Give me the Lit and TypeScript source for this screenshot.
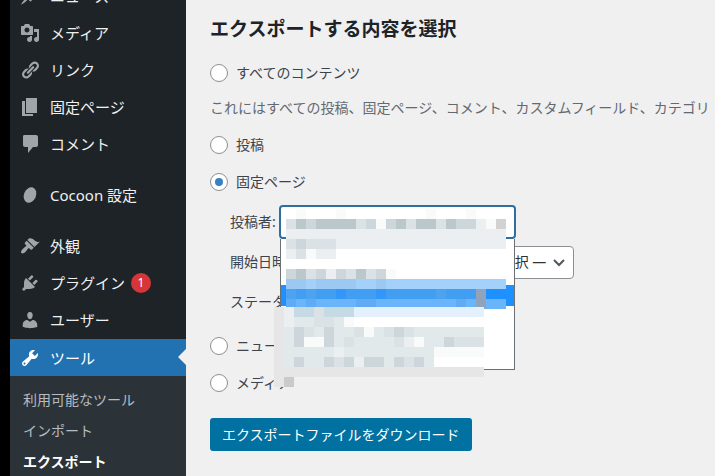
import { LitElement, html, css, svg } from "lit";
import { customElement, property } from "lit/decorators.js";
import { classMap } from "lit/directives/class-map.js";

const ICONS: Record<string, string> = {
  post: "M10.44 3.02l1.82-1.82 6.36 6.35-1.83 1.82c-1.05-.68-2.48-.57-3.41.36l-.75.75c-.92.93-1.04 2.35-.35 3.41l-1.83 1.82-2.41-2.41-2.8 2.79c-.42.42-3.38 2.71-3.8 2.29s1.86-3.39 2.28-3.81l2.79-2.79L4.1 9.36l1.83-1.82c1.05.69 2.48.57 3.4-.36l.75-.75c.93-.92 1.05-2.35.36-3.41z",
  media: "M13 11V4c0-.55-.45-1-1-1h-1.67L9 1H5L3.67 3H2c-.55 0-1 .45-1 1v7c0 .55.45 1 1 1h10c.55 0 1-.45 1-1zM7 4.5c1.38 0 2.5 1.12 2.5 2.5S8.38 9.5 7 9.5 4.5 8.38 4.5 7 5.62 4.5 7 4.5zM14 6h5v10.5c0 1.38-1.12 2.5-2.5 2.5S14 17.88 14 16.5s1.12-2.5 2.5-2.5c.17 0 .34.02.5.05V9h-3V6zm-4 8.05V13h2v3.5c0 1.38-1.12 2.5-2.5 2.5S7 17.88 7 16.5 8.12 14 9.5 14c.17 0 .34.02.5.05z",
  links: "M17.74 2.76c1.68 1.69 1.68 4.41 0 6.1l-1.53 1.52c-1.12 1.12-2.7 1.47-4.14 1.09l2.62-2.61.76-.77.76-.76c.84-.84.84-2.2 0-3.04-.84-.85-2.2-.85-3.04 0l-.77.76-3.38 3.38c-.37-1.44-.02-3.02 1.1-4.14l1.52-1.53c1.69-1.68 4.42-1.68 6.1 0zM8.59 13.43l5.34-5.34c.42-.42.42-1.1 0-1.52-.44-.43-1.13-.39-1.53 0l-5.33 5.34c-.42.42-.42 1.1 0 1.52.44.43 1.13.39 1.52 0zm-.76 2.29l4.14-4.15c.38 1.44.03 3.02-1.09 4.14l-1.52 1.53c-1.69 1.68-4.41 1.68-6.1 0-1.68-1.68-1.68-4.42 0-6.1l1.53-1.52c1.12-1.12 2.7-1.47 4.14-1.1l-4.14 4.15c-.85.84-.85 2.2 0 3.05.84.84 2.2.84 3.04 0z",
  page: "M6 16V1h11v15H6zm-1 1h8v2H2V4h3v13z",
  comments: "M4 1h12c1.1 0 2 .9 2 2v8c0 1.1-.9 2-2 2h-3l-5 6v-6H5c-1.1 0-2-.9-2-2V3c0-1.1.4-2 1-2z",
  appearance: "M14.48 11.06L7.41 3.99l1.5-1.5c.5-.56 2.3-.47 3.51.32 1.21.8 1.43 1.28 2.91 2.1 1.18.64 2.45 1.26 4.45.85zm-.71.71L6.7 4.7 4.93 6.47c-.39.39-.39 1.02 0 1.41l1.06 1.06c.39.39.39 1.03 0 1.42-.6.6-1.43 1.11-2.21 1.69-.35.26-.7.53-1.01.84C1.43 14.23.4 16.08 1.4 17.07c.99 1 2.84-.03 4.18-1.36.31-.31.58-.66.85-1.02.57-.78 1.08-1.61 1.69-2.21.39-.39 1.02-.39 1.41 0l1.06 1.06c.39.39 1.02.39 1.41 0z",
  plugins: "M13.11 4.36L9.87 7.6 8 5.73l3.24-3.24c.35-.34 1.05-.2 1.56.32.52.51.66 1.21.31 1.55zm-8 1.77l.91-1.12 9.01 9.01-1.19.84c-.71.71-2.63 1.16-3.82 1.16H6.14L4.9 17.26c-.59.59-1.54.59-2.12 0-.59-.58-.59-1.53 0-2.12l1.24-1.24v-3.88c0-1.13.4-3.19 1.09-3.89zm7.26 3.97l3.24-3.24c.34-.35 1.04-.21 1.55.31.52.51.66 1.21.31 1.55l-3.24 3.25z",
  users: "M10 9.25c-2.27 0-2.73-3.44-2.73-3.44C7 4.02 7.82 2 9.97 2c2.16 0 2.98 2.02 2.71 3.81 0 0-.41 3.44-2.68 3.44zm0 2.57L12.72 10c2.39 0 4.52 2.33 4.52 4.53v2.49s-3.65 1.13-7.24 1.13c-3.65 0-7.24-1.13-7.24-1.13v-2.49c0-2.25 1.94-4.48 4.47-4.48z",
  tools: "M16.68 9.77c-1.34 1.34-3.3 1.67-4.95.99l-5.41 6.52c-.99.99-2.59.99-3.58 0s-.99-2.59 0-3.57l6.52-5.42c-.68-1.65-.35-3.61.99-4.95 1.28-1.28 3.12-1.62 4.72-1.06l-2.89 2.89 2.82 2.82 2.86-2.87c.53 1.58.18 3.39-1.08 4.65zM3.81 16.21c.4.39 1.04.39 1.43 0 .4-.4.4-1.04 0-1.43-.39-.4-1.03-.4-1.43 0-.39.39-.39 1.03 0 1.43z",
};

interface MenuItem {
  label: string;
  icon: string;
  badge?: number;
  current?: boolean;
  spaced?: boolean;
}

const MENU: MenuItem[] = [
  { label: "ニュース", icon: "post" },
  { label: "メディア", icon: "media" },
  { label: "リンク", icon: "links" },
  { label: "固定ページ", icon: "page" },
  { label: "コメント", icon: "comments" },
  { label: "Cocoon 設定", icon: "cocoon", spaced: true },
  { label: "外観", icon: "appearance", spaced: true },
  { label: "プラグイン", icon: "plugins", badge: 1 },
  { label: "ユーザー", icon: "users" },
  { label: "ツール", icon: "tools", current: true },
];

const SUBMENU = ["利用可能なツール", "インポート", "エクスポート"];

const PALETTE: Record<string, string> = {
  w: "#ffffff", f: "#f9fbfb", e: "#eceff1", d: "#dbe2e5", c: "#cdd6da",
  b: "#bac8cc", g: "#d2d2d3", h: "#e2e9ea", k: "#e6e6e7", l: "#cacacc",
  p: "#a4d1f9", q: "#9bc9f1", r: "#429ef0", s: "#3297f8", t: "#4ea3f0",
  u: "#6ab4fa", v: "#60abf5", x: "#90a3ba", y: "#e4f1fd", z: "#c6dae4",
};

const UPPER_TILES = [
  "wfwwwfwwwwwwwwfwwwfwww",
  "dbcbbbbdcfcbdbbdbccefg",
  "eeeeeeeeeeeeeeeeeeeeee",
  "dcdddeeeeeeeeeeeeeeeee",
  "edfeewwwwwwwwwwwwwwwww",
  "wwwwwwwwwwwwwwwwwwwwww",
  "cbdcecdbdcfwwwwwwwwwww",
  "qqpqqqqppqpppppppppppp",
  "trtrrsrrrsrrrrrtrrrx..",
  "vuvuuuuvvuuuuuuuuvuxuu",
];

const LOWER_TILES = [
  "kezzdzzzyyyyyyyyyyyyy",
  "kehhddhfwwwwwwwwwwwww",
  "khcdhchhdfhdcdhhhhhhh",
  "khcffchdhhhhdefhhcddd",
  "khhhhhehhhhhhhhhfffff",
  "khchhcdcecchcdchwwwww",
  "kkkkkkkkkkkkkkkkkkkkk",
  "kl...................",
];

@customElement("menu-icon")
class MenuIcon extends LitElement {
  @property() name = "";
  static styles = css`
    :host { display: block; width: 20px; height: 20px; }
    svg { display: block; width: 20px; height: 20px; fill: currentColor; }
  `;
  render() {
    return html`<svg viewBox="0 0 20 20" aria-hidden="true">
      ${this.name === "cocoon"
        ? svg`<ellipse cx="10" cy="10" rx="6" ry="8" transform="rotate(22 10 10)"></ellipse>`
        : svg`<path d=${ICONS[this.name] ?? ""}></path>`}
    </svg>`;
  }
}

@customElement("pixel-mask")
class PixelMask extends LitElement {
  @property({ attribute: false }) rows: string[] = [];
  static styles = css`
    :host { display: block; }
    svg { display: block; }
  `;
  render() {
    const width = (this.rows[0]?.length ?? 0) * 10;
    const height = this.rows.length * 10;
    return html`<svg width=${width} height=${height} shape-rendering="crispEdges" aria-hidden="true">
      ${this.rows.map((row, y) =>
        [...row].map((tile, x) =>
          PALETTE[tile]
            ? svg`<rect x=${x * 10} y=${y * 10} width="10" height="10" fill=${PALETTE[tile]}></rect>`
            : null,
        ),
      )}
    </svg>`;
  }
}

@customElement("admin-menu")
class AdminMenu extends LitElement {
  static styles = css`
    :host { display: block; background: #1d2327; border-left: 10px solid #000; }
    ul { list-style: none; margin: 0; padding: 0; }
    a { color: #f0f0f1; text-decoration: none; }
    .menu { margin-top: -22px; }
    .spaced { margin-top: 14px; }
    .item {
      box-sizing: border-box;
      position: relative;
      display: flex;
      align-items: center;
      gap: 10px;
      height: 37px;
      padding: 0 0 2px 10px;
      font-size: 15px;
      line-height: 20px;
    }
    menu-icon { color: #a0a5aa; }
    .current { padding-bottom: 0; background: #2271b1; color: #fff; }
    .current menu-icon { color: #fff; }
    .current::after {
      content: "";
      position: absolute;
      right: 0;
      top: 10px;
      border: 8px solid transparent;
      border-left-width: 0;
      border-right-color: #f0f0f1;
    }
    .badge {
      display: grid;
      place-items: center;
      width: 20px;
      height: 20px;
      margin-left: -4px;
      border-radius: 50%;
      background: #d63638;
      color: #fff;
      font-size: 12px;
    }
    .submenu { background: #2c3338; padding: 8px 0; }
    .subitem {
      display: flex;
      align-items: center;
      height: 31px;
      padding-left: 13px;
      font-size: 14px;
      line-height: 20px;
      color: #b5bcc2;
    }
    .active { color: #fff; font-weight: 700; }
  `;
  render() {
    return html`<nav>
      <ul class="menu">
        ${MENU.map(
          (m) => html`<li class=${classMap({ spaced: !!m.spaced })}>
            <a href="#" class=${classMap({ item: true, current: !!m.current })}>
              <menu-icon name=${m.icon}></menu-icon>
              <span>${m.label}</span>
              ${m.badge ? html`<span class="badge">${m.badge}</span>` : null}
            </a>
          </li>`,
        )}
      </ul>
      <ul class="submenu">
        ${SUBMENU.map(
          (label, i) => html`<li>
            <a href="#" class=${classMap({ subitem: true, active: i === 2 })}>${label}</a>
          </li>`,
        )}
      </ul>
    </nav>`;
  }
}

@customElement("export-form")
class ExportForm extends LitElement {
  static styles = css`
    :host { display: block; min-width: 0; padding: 14px 0 24px 24px; overflow: hidden; color: #3c434a; }
    * { box-sizing: border-box; }
    h2 { margin: 0 0 10px; font-size: 19px; line-height: 30px; color: #1d2327; }
    form { font-size: 14px; line-height: 20px; }
    .choice { display: flex; align-items: center; gap: 8px; height: 37px; }
    .radio {
      appearance: none;
      display: grid;
      place-items: center;
      width: 18px;
      height: 18px;
      margin: 0;
      border: 1px solid #8c8f94;
      border-radius: 50%;
      background: #fff;
    }
    .radio:checked::before {
      content: "";
      width: 8px;
      height: 8px;
      border-radius: 50%;
      background: #3582c4;
    }
    .note { margin: 0; height: 35px; line-height: 34px; white-space: nowrap; color: #646970; }
    .fields { display: grid; gap: 6px; margin: 5px 0 8px; padding-left: 20px; }
    .field { display: flex; align-items: center; gap: 3px; height: 34px; }
    .dates { width: 344px; justify-content: space-between; }
    .combo { position: relative; z-index: 1; }
    .select {
      appearance: none;
      height: 33px;
      margin: 0;
      padding: 0 24px 0 8px;
      border: 1px solid #8c8f94;
      border-radius: 4px;
      background: #fff;
      color: #2c3338;
      font: inherit;
    }
    .author { display: block; width: 237px; height: 34px; border: 2px solid #2f6f9f; }
    .date { width: 100px; }
    .picker { position: relative; display: flex; }
    .chevron {
      position: absolute;
      right: 8px;
      top: 10px;
      width: 14px;
      height: 14px;
      fill: none;
      stroke: #50575e;
      stroke-width: 2;
      pointer-events: none;
    }
    .list {
      position: absolute;
      left: 1px;
      top: 34px;
      width: 235px;
      height: 131px;
      padding-top: 46px;
      background: #fff;
      border: 1px solid #6b7075;
      border-top: 0;
    }
    .highlight { height: 21px; background: #1e90ff; }
    .upper { position: absolute; left: 7px; top: 4px; }
    .lower { position: absolute; left: -5px; top: 102px; }
    .submit {
      height: 33px;
      margin-top: 17px;
      padding: 0 12px;
      border: 0;
      border-radius: 3px;
      background: #0071a1;
      color: #fff;
      font: inherit;
    }
  `;
  private choice(id: string, label: string, checked = false) {
    return html`<label class="choice">
      <input class="radio" type="radio" name="content" value=${id} ?checked=${checked} />
      <span>${label}</span>
    </label>`;
  }
  render() {
    return html`<h2>エクスポートする内容を選択</h2>
      <form>
        ${this.choice("all", "すべてのコンテンツ")}
        <p class="note">これにはすべての投稿、固定ページ、コメント、カスタムフィールド、カテゴリ</p>
        ${this.choice("posts", "投稿")}
        ${this.choice("pages", "固定ページ", true)}
        <div class="fields">
          <div class="field">
            <label for="author">投稿者:</label>
            <div class="combo">
              <select id="author" class="select author"></select>
              <div class="list"><div class="highlight"></div></div>
              <pixel-mask class="upper" .rows=${UPPER_TILES}></pixel-mask>
              <pixel-mask class="lower" .rows=${LOWER_TILES}></pixel-mask>
            </div>
          </div>
          <div class="field dates">
            <label for="date">開始日時:</label>
            <div class="picker">
              <select id="date" class="select date"><option>— 選択 —</option></select>
              <svg class="chevron" viewBox="0 0 14 14" aria-hidden="true"><path d="M2 4l5 5 5-5"></path></svg>
            </div>
          </div>
          <div class="field"><span>ステータス</span></div>
        </div>
        ${this.choice("news", "ニュース")}
        ${this.choice("media", "メディア")}
        <button class="submit" type="button">エクスポートファイルをダウンロード</button>
      </form>`;
  }
}

@customElement("app-root")
class AppRoot extends LitElement {
  static styles = css`
    :host {
      display: grid;
      grid-template-columns: 186px minmax(0, 1fr);
      height: 100vh;
      overflow: hidden;
      background: #f0f0f1;
      font-family: "Noto Sans", "Noto Sans CJK JP", sans-serif;
    }
    admin-menu { box-sizing: border-box; overflow: hidden; }
  `;
  render() {
    return html`<admin-menu></admin-menu><export-form></export-form>`;
  }
}
